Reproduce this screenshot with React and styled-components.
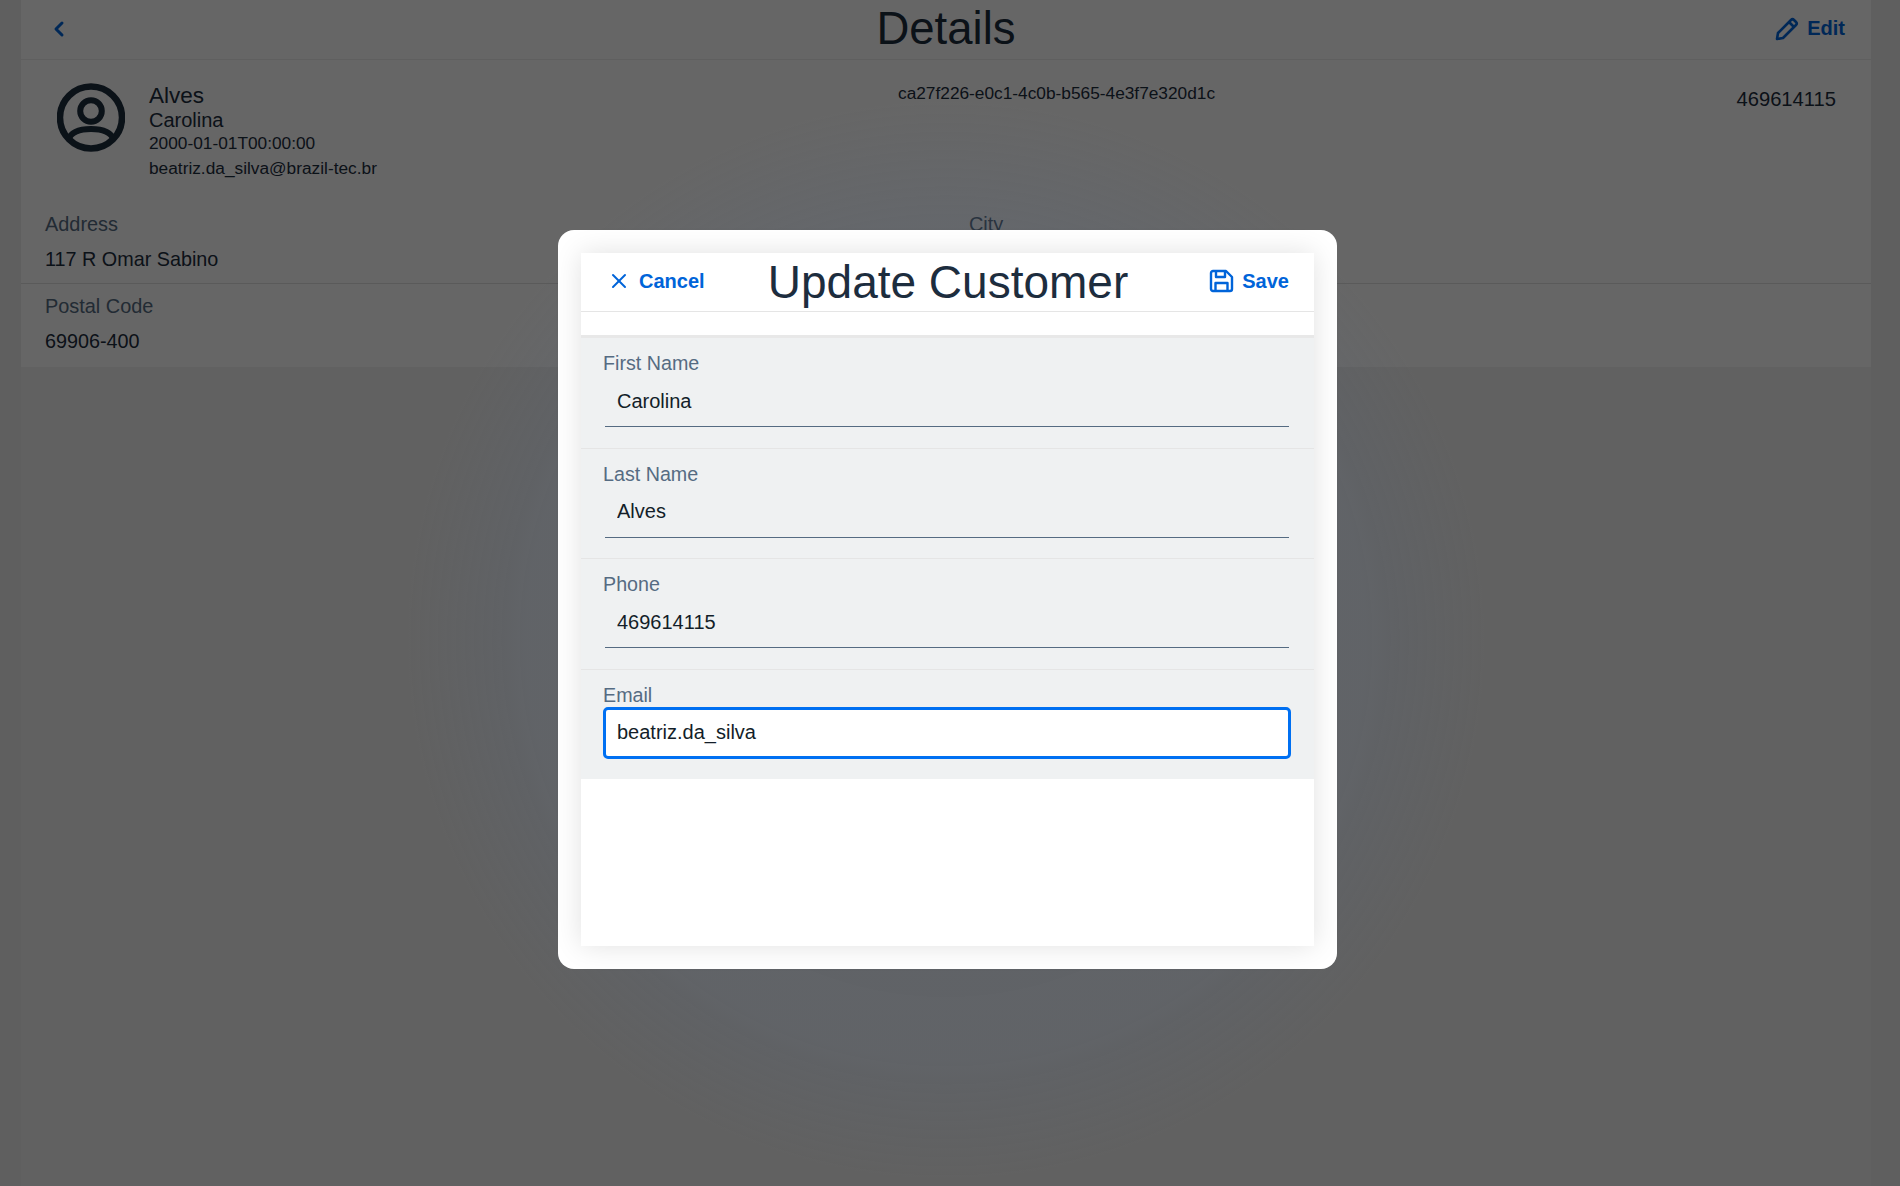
import React from 'react';
import styled, { createGlobalStyle } from 'styled-components';
import { ChevronLeft, X } from 'lucide-react';

const fontStack = `'Liberation Sans', Arial, sans-serif`;

const GlobalStyle = createGlobalStyle`
	html, body {
		margin: 0;
		padding: 0;
		height: 100%;
		overflow: hidden;
		background: #eeeeee;
		font-family: ${fontStack};
		color: #1d2d3e;
	}
`;

const Page = styled.div`
	width: 1850px;
	height: 1186px;
	margin: 0 auto 0 21px;
	background: #f2f2f2;
`;

const Bar = styled.header`
	height: 59px;
	padding: 0 26px 0 26px;
	display: grid;
	grid-template-columns: 1fr auto 1fr;
	align-items: center;
	background: #fff;
	border-bottom: 1px solid #ededed;
`;

const BarTitle = styled.h1`
	margin: 0 0 1px;
	font-size: 45.5px;
	font-weight: 400;
`;

const LinkButton = styled.button`
	display: inline-flex;
	align-items: center;
	gap: ${(p) => p.$gap || 8}px;
	padding: 0 0 2px;
	border: 0;
	background: none;
	color: #0064d9;
	font: 700 20px ${fontStack};
	justify-self: ${(p) => p.$end ? 'end' : 'start'};
`;

const Summary = styled.section`
	background: #fff;
`;

const Profile = styled.div`
	height: 106px;
	box-sizing: border-box;
	padding: 23px 35px 0 36px;
	display: grid;
	grid-template-columns: 841px 1fr auto;
`;

const Person = styled.div`
	display: flex;
	gap: 24px;
`;

const Names = styled.div`
	display: flex;
	flex-direction: column;
`;

const NameLine = styled.div`
	font-size: ${(p) => p.$size}px;
	line-height: ${(p) => p.$line}px;
`;

const Uuid = styled.div`
	font-size: 17.3px;
	line-height: 20px;
`;

const PhoneText = styled.div`
	font-size: 20.2px;
	line-height: 24px;
	margin-top: 4px;
`;

const InfoRow = styled.div`
	height: ${(p) => p.$height}px;
	padding: ${(p) => p.$top}px 24px 0;
	display: grid;
	grid-template-columns: 924px 1fr;
	border-bottom: ${(p) => p.$line ? '1px solid #e0e0e0' : '0'};
	box-sizing: border-box;
`;

const InfoLabel = styled.div`
	color: #556b82;
	font-size: 19.9px;
	line-height: 26px;
`;

const InfoValue = styled.div`
	font-size: 19.8px;
	line-height: 26px;
	margin-top: 9px;
`;

const Overlay = styled.div`
	position: fixed;
	inset: 0;
	background:
		radial-gradient(circle at 946px 640px, rgba(90, 110, 140, 0.15) 0, rgba(90, 110, 140, 0.13) 420px, rgba(90, 110, 140, 0) 540px),
		rgba(0, 0, 0, 0.6);
`;

const Modal = styled.div`
	position: absolute;
	left: 558px;
	top: 230px;
	width: 779px;
	height: 739px;
	padding: 23px;
	box-sizing: border-box;
	background: #fff;
	border-radius: 16px;
`;

const Panel = styled.div`
	height: 100%;
	background: #fff;
	box-shadow: 0 0 26px rgba(0, 0, 0, 0.12);
`;

const ModalBar = styled.div`
	height: 58px;
	padding: 0 25px 0 26px;
	display: grid;
	grid-template-columns: 1fr auto 1fr;
	align-items: center;
	border-bottom: 1px solid #e5e5e5;
`;

const ModalTitle = styled.h2`
	margin: 0 0 1px;
	font-size: 46px;
	font-weight: 400;
`;

const SubBar = styled.div`
	height: 23px;
	border-bottom: 3px solid #e8e8e8;
`;

const Form = styled.form`
	background: #eff1f2;
`;

const FieldRow = styled.div`
	height: ${(p) => p.$height}px;
	padding: 12px 20px 0 22px;
	box-sizing: border-box;
	border-bottom: ${(p) => p.$last ? '0' : '1px solid #e5e5e5'};
`;

const FieldLabel = styled.label`
	display: block;
	color: #556b82;
	font-size: 19.7px;
	line-height: 26px;
`;

const FieldInput = styled.input`
	display: block;
	box-sizing: border-box;
	width: ${(p) => p.$focused ? 688 : 684}px;
	height: ${(p) => p.$focused ? 52 : 51}px;
	margin: ${(p) => p.$focused ? '-1px 0 0' : '0 2px'};
	padding: 0 ${(p) => p.$focused ? 11 : 12}px;
	border: 0;
	border-bottom: 1px solid #556b82;
	border-radius: 0;
	outline: none;
	background: transparent;
	color: #131e29;
	font: 400 20px ${fontStack};
	${(p) => p.$focused && `
		border: 3px solid #0070f2;
		border-radius: 5px;
		background: #fff;
	`}
`;

const Avatar = () => (
	<svg width="68" height="69" viewBox="0 0 68 69" fill="none" stroke="#1d2d3e" strokeWidth="6.5">
		<circle cx="34" cy="34.5" r="31" />
		<circle cx="34" cy="28" r="10.8" strokeWidth="6" />
		<path d="M11 57c3-8 12-11 23-11s20 3 23 11" strokeWidth="6" />
	</svg>
);

const EditIcon = () => (
	<svg width="25" height="25" viewBox="0 0 25 25" fill="none" stroke="currentColor" strokeWidth="2.6" strokeLinejoin="round">
		<path d="M2 23l1-6L16 4c1-1 2-1 3 0l2 2c1 1 1 2 0 3L8 22z" />
		<path d="M14 6l5 5" />
	</svg>
);

const SaveIcon = () => (
	<svg width="25" height="24" viewBox="0 0 25 24" fill="none" stroke="currentColor" strokeWidth="2.4" strokeLinejoin="round">
		<path d="M4 2h13l6 6v12a2 2 0 0 1-2 2H4a2 2 0 0 1-2-2V4a2 2 0 0 1 2-2z" />
		<path d="M7 2v6h9V2" />
		<path d="M6.5 22v-8h12v8" />
	</svg>
);

const fields = [
	{ label: 'First Name', value: 'Carolina' },
	{ label: 'Last Name', value: 'Alves' },
	{ label: 'Phone', value: '469614115' },
	{ label: 'Email', value: 'beatriz.da_silva', focused: true },
];

export default function App() {
	return (
		<>
			<GlobalStyle />
			<Page>
				<Bar>
					<LinkButton aria-label="Back"><ChevronLeft size={24} strokeWidth={3} /></LinkButton>
					<BarTitle>Details</BarTitle>
					<LinkButton $end $gap={7}><EditIcon />Edit</LinkButton>
				</Bar>
				<Summary>
					<Profile>
						<Person>
							<Avatar />
							<Names>
								<NameLine $size={22.5} $line={25}>Alves</NameLine>
								<NameLine $size={20} $line={24}>Carolina</NameLine>
								<NameLine $size={17.3} $line={22}>2000-01-01T00:00:00</NameLine>
								<NameLine $size={17.3} $line={29}>beatriz.da_silva@brazil-tec.br</NameLine>
							</Names>
						</Person>
						<Uuid>ca27f226-e0c1-4c0b-b565-4e3f7e320d1c</Uuid>
						<PhoneText>469614115</PhoneText>
					</Profile>
					<InfoRow $height={118} $top={45} $line>
						<div>
							<InfoLabel>Address</InfoLabel>
							<InfoValue>117 R Omar Sabino</InfoValue>
						</div>
						<InfoLabel>City</InfoLabel>
					</InfoRow>
					<InfoRow $height={83} $top={9}>
						<div>
							<InfoLabel>Postal Code</InfoLabel>
							<InfoValue>69906-400</InfoValue>
						</div>
					</InfoRow>
				</Summary>
			</Page>
			<Overlay />
			<Modal>
				<Panel>
					<ModalBar>
						<LinkButton $gap={8}><X size={24} strokeWidth={2} />Cancel</LinkButton>
						<ModalTitle>Update Customer</ModalTitle>
						<LinkButton $end $gap={8}><SaveIcon />Save</LinkButton>
					</ModalBar>
					<SubBar />
					<Form>
						{fields.map((f, i) => (
							<FieldRow key={f.label} $height={i === 3 ? 109.5 : 110.5} $last={i === 3}>
								<FieldLabel htmlFor={f.label}>{f.label}</FieldLabel>
								<FieldInput id={f.label} defaultValue={f.value} $focused={f.focused} />
							</FieldRow>
						))}
					</Form>
				</Panel>
			</Modal>
		</>
	);
}
